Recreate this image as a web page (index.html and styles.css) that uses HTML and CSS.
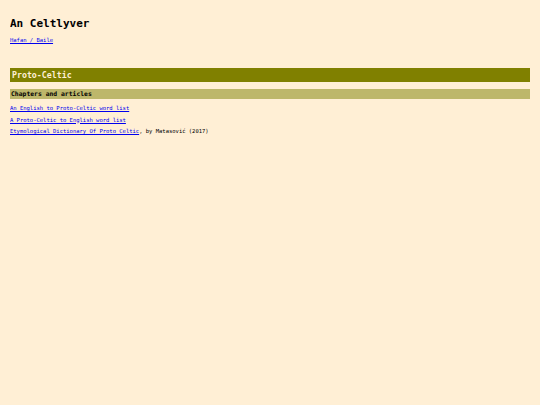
FILE: index.html
```html
<!DOCTYPE html>
<html lang="cy">
<head>
  <meta charset="UTF-8">
  <title>An Celtlyver - Proto-Celtic</title>
  <link rel="stylesheet" href="styles.css">
</head>
<body>
  <div class="page-head">
    <h1>An Celtlyver</h1>
    <p class="crumbs"><a href="#">Hafan / Baile</a></p>
  </div>

  <h2 class="lang-title">Proto-Celtic</h2>

  <h3 class="section-title">Chapters and articles</h3>
  <p><a href="#">An English to Proto-Celtic word list</a></p>
  <p><a href="#">A Proto-Celtic to English word list</a></p>
  <p><a href="#">Etymological Dictionary Of Proto Celtic</a>, by Matasović (2017)</p>
</body>
</html>
```

FILE: styles.css
```css
/* page */
body {
  margin: 10px;
  background-color: #ffefd5;
  color: #000;
  font-family: "DejaVu Sans Mono", "Liberation Mono", monospace;
  font-size: 5.5px;
}

a {
  color: #0000ee;
}

h1 {
  font-size: 11px;
  margin: 7px 0;
}

.page-head {
  margin-bottom: 25px;
}

/* language heading */
.lang-title {
  background-color: #808000;
  color: #ffefd5;
  font-size: 8.25px;
  padding: 2px 2px;
  margin: 0 0 7px;
}

.section-title {
  background-color: #bdb76b;
  font-size: 6.4px;
  padding: 1px 1px;
  margin: 0 0 6px;
}

p {
  margin: 5.5px 0;
}
```
